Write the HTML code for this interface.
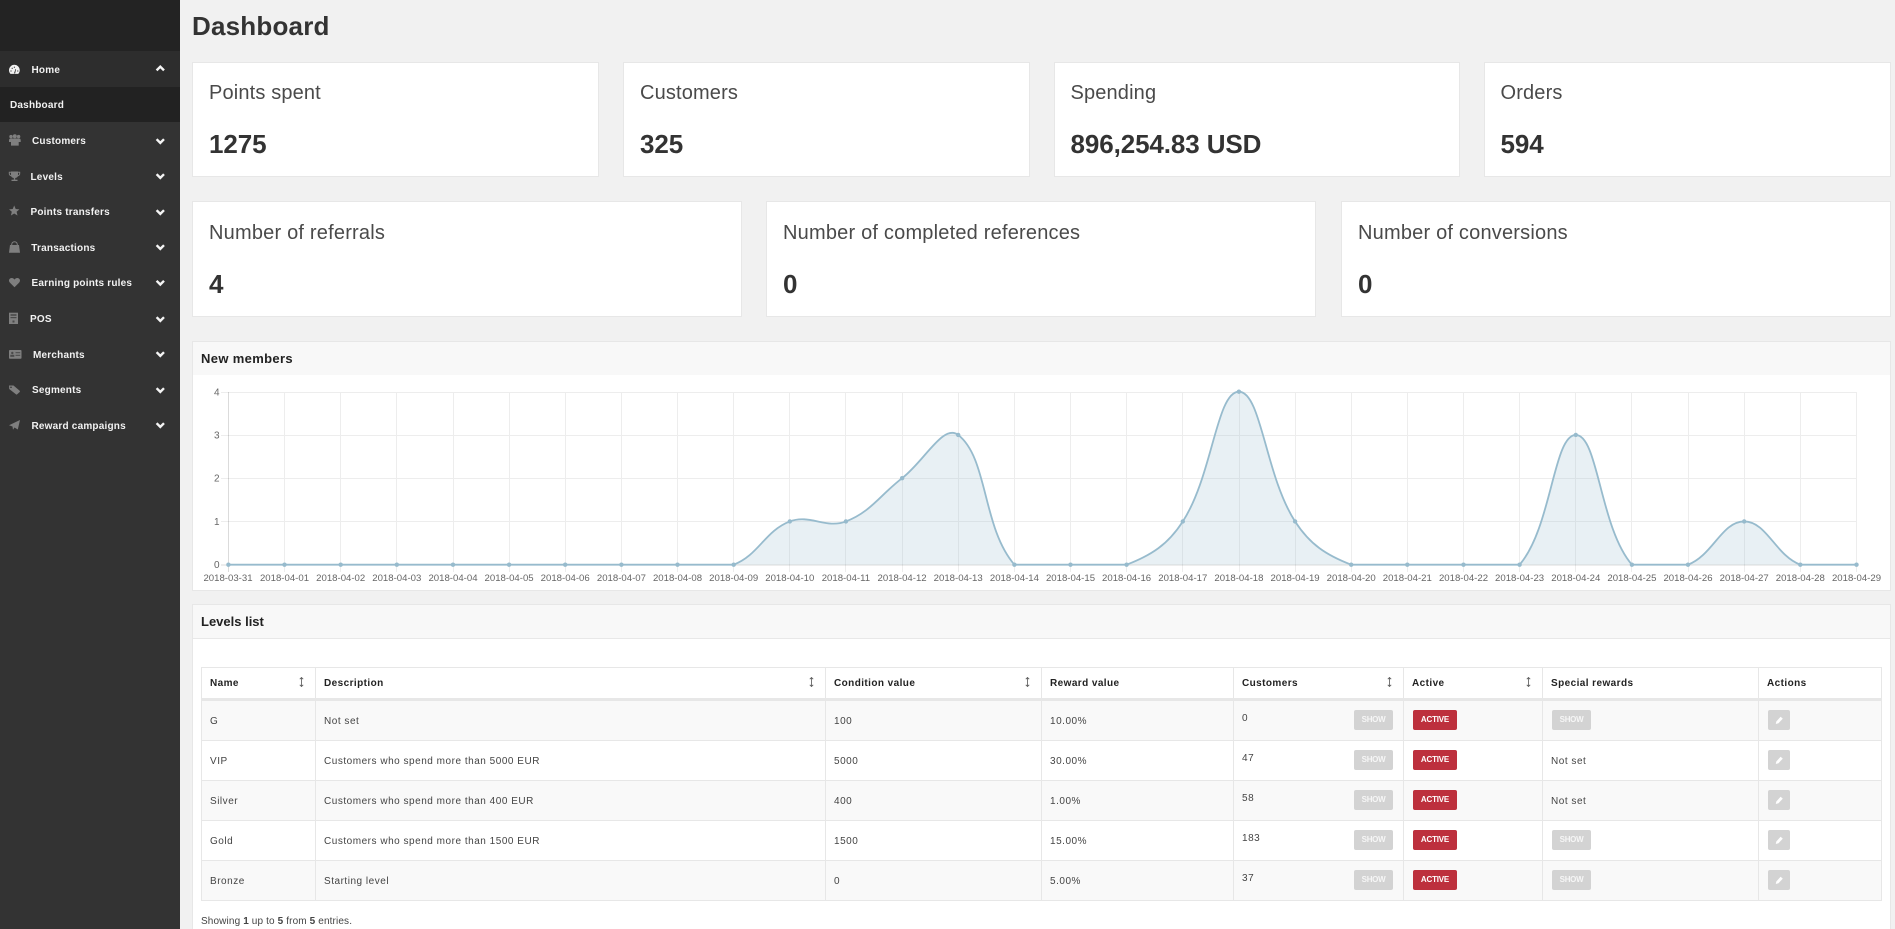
<!DOCTYPE html>
<html lang="en">
<head>
<meta charset="utf-8">
<title>Dashboard</title>
<style>
html,body{margin:0;padding:0;width:1895px;height:929px;overflow:hidden;background:#f1f1f1;font-family:"Liberation Sans",sans-serif;color:#333}
body{position:relative}
.side{position:absolute;left:0;top:0;width:180px;height:929px;background:#333}
.side .top{position:absolute;left:0;top:0;width:180px;height:51px;background:#232323}
.side .home{position:absolute;left:0;top:51px;width:180px;height:36px;background:#2d2d2d}
.side .dash{position:absolute;left:0;top:87px;width:180px;height:35px;background:#222}
.nav{position:absolute;font-size:10px;font-weight:bold;line-height:14px;letter-spacing:.2px;color:#f2f2f2;white-space:nowrap}
.side svg{position:absolute;left:0;top:0}
h1{position:absolute;left:192px;top:11px;margin:0;font-size:26px;line-height:30px;font-weight:bold;letter-spacing:.2px;color:#333}
.card{position:absolute;box-sizing:border-box;background:#fff;border:1px solid #e7e7e7}
.r1{top:62px;height:115px;width:406px}
.r2{top:201px;height:116px;width:549px}
.lbl{position:absolute;left:16px;top:18px;font-size:20px;line-height:24px;letter-spacing:.15px;color:#4a4a4a;white-space:nowrap}
.val{position:absolute;left:16px;top:66px;font-size:26px;line-height:30px;font-weight:bold;letter-spacing:-.1px;color:#333;white-space:nowrap}
.panel{position:absolute;left:192px;width:1698px;box-sizing:border-box;background:#fff;border:1px solid #e7e7e7}
.phead{position:absolute;left:0;top:0;right:0;background:#f8f8f8}
.ptitle{position:absolute;font-size:13px;font-weight:bold;line-height:16px;color:#222;white-space:nowrap}
table{position:absolute;left:201px;top:667px;width:1681px;table-layout:fixed;border-spacing:0;border-collapse:separate;border-top:1px solid #e7e7e7;border-left:1px solid #e7e7e7;font-size:10px;letter-spacing:.52px;color:#444}
th,td{box-sizing:border-box;padding:2px 0 0 8px;text-align:left;vertical-align:middle;border-right:1px solid #e7e7e7;position:relative;white-space:nowrap;line-height:14px}
th{height:33px;border-bottom:3px solid #e7e7e7;font-weight:bold;color:#222;background:#fff;letter-spacing:.42px}
td{height:40px;border-bottom:1px solid #e7e7e7}
tr.o td{background:#f9f9f9}
tr.e td{background:#fff}
.n{position:relative;top:-3px}
.b{position:absolute;top:9px;height:20px;border-radius:2px;background:#d3d3d3;color:#f6f6f6;font-size:8px;font-weight:bold;line-height:20px;text-align:center;letter-spacing:-.3px}
.a{background:#bd303d;color:#fff;letter-spacing:-.2px;width:44px;left:9px}
.s1{width:39px;left:120px}
.s2{width:39px;left:9px}
.ed{width:22px;left:9px}
.ed svg{position:absolute;left:0;top:0}
.so{position:absolute;top:9px}
.foot{position:absolute;left:201px;top:914.5px;font-size:10px;line-height:14px;letter-spacing:.13px;color:#444;white-space:nowrap}
#chart{position:absolute;left:0;top:0}
</style>
</head>
<body>

<div class="side">
  <div class="top"></div>
  <div class="home"></div>
  <div class="dash"></div>
  <svg width="180" height="929" viewBox="0 0 180 929">
    <g fill="none" stroke="#f4f4f4" stroke-width="2.4">
      <path d="M156.6 70.4l3.7-3.7 3.7 3.7"/>
      <path d="M156.6 139.2l3.7 3.7 3.7-3.7"/>
      <path d="M156.6 174.2l3.7 3.7 3.7-3.7"/>
      <path d="M156.6 210.2l3.7 3.7 3.7-3.7"/>
      <path d="M156.6 245.2l3.7 3.7 3.7-3.7"/>
      <path d="M156.6 280.8l3.7 3.7 3.7-3.7"/>
      <path d="M156.6 317.2l3.7 3.7 3.7-3.7"/>
      <path d="M156.6 352.2l3.7 3.7 3.7-3.7"/>
      <path d="M156.6 388.2l3.7 3.7 3.7-3.7"/>
      <path d="M156.6 423.2l3.7 3.7 3.7-3.7"/>
    </g>
    <path d="M10.5 73.9A5.4 5.4 0 1 1 18.3 73.9z" fill="#f2f2f2"/>
    <g fill="#2d2d2d"><circle cx="11" cy="71" r=".6"/><circle cx="12.2" cy="68.3" r=".6"/><circle cx="14.4" cy="67.2" r=".6"/><circle cx="17.8" cy="71" r=".6"/><path d="M14 73.4l1.5-4.4.6.2-1 4.2z"/></g>
    <g fill="#7f7f7f">
      <circle cx="11" cy="136.6" r="1.7"/><circle cx="14.8" cy="136.2" r="2"/><circle cx="18.6" cy="136.6" r="1.7"/>
      <path d="M9 140.2q0-1.7 2-1.7h7.7q2 0 2 1.7v1.8h-2v3.6h-7.7v-3.6h-2z"/>
      <path d="M11 171.5h7v3.5q0 3-3.5 3t-3.5-3z"/>
      <rect x="13.8" y="177.8" width="1.4" height="2"/><rect x="11.5" y="179.7" width="6" height="1.3"/>
      <polygon points="14.2,205.5 15.7,209 19.4,209.4 16.6,211.8 17.5,215.5 14.2,213.5 10.9,215.5 11.8,211.8 9,209.4 12.7,209"/>
      <path d="M10 245h9l1 7.7H9z"/>
      <path d="M14.5 287.3L10 282.8C8 280.6 9.2 278 11.7 278 13 278 14 278.7 14.5 279.6 15 278.7 16 278 17.3 278 19.8 278 21 280.6 19 282.8z"/>
      <rect x="9" y="312.7" width="9" height="11.3"/>
      <rect x="9" y="350" width="12.5" height="8.7" rx=".8"/>
      <path d="M9 385.5h4.5l6.2 5.2a1 1 0 0 1 0 1.3l-2.5 2.3a1 1 0 0 1-1.3 0L9.2 389z"/>
      <path d="M20 420L17.8 429.5 14.5 427.5 13 429.8 12.5 426.5 9 425.2z"/>
    </g>
    <g fill="none" stroke="#7f7f7f" stroke-width="1">
      <path d="M11 172.3H9.3v1.2q0 2 2.2 2.4M18 172.3h1.7v1.2q0 2-2.2 2.4"/>
      <path d="M11.7 245.5v-1a2.8 2.8 0 0 1 5.6 0v1"/>
    </g>
    <g fill="#4a4a4a">
      <rect x="10.5" y="314.2" width="6" height="1.6"/><rect x="10.5" y="317" width="6" height="1.2"/><rect x="12.5" y="320.5" width="2" height="2"/>
      <circle cx="12.3" cy="353" r="1.2"/><rect x="10.3" y="354.8" width="4" height="2"/><rect x="15.5" y="352.2" width="4.7" height="1"/><rect x="15.5" y="354.8" width="4.7" height="1"/>
      <circle cx="11" cy="387.3" r=".8" fill="#333"/>
    </g>
  </svg>
  <div class="nav" style="left:31.5px;top:63.5px">Home</div>
  <div class="nav" style="left:10px;top:98.5px">Dashboard</div>
  <div class="nav" style="left:32px;top:135px">Customers</div>
  <div class="nav" style="left:30.5px;top:171px">Levels</div>
  <div class="nav" style="left:30.5px;top:205.5px">Points transfers</div>
  <div class="nav" style="left:31.3px;top:241.5px">Transactions</div>
  <div class="nav" style="left:31.5px;top:276.5px">Earning points rules</div>
  <div class="nav" style="left:30px;top:312.5px">POS</div>
  <div class="nav" style="left:33px;top:348.5px">Merchants</div>
  <div class="nav" style="left:32px;top:383.5px">Segments</div>
  <div class="nav" style="left:31.5px;top:419.5px">Reward campaigns</div>
</div>

<h1>Dashboard</h1>

<div class="card r1" style="left:192px;width:407px"><div class="lbl">Points spent</div><div class="val">1275</div></div>
<div class="card r1" style="left:623px;width:407px"><div class="lbl">Customers</div><div class="val">325</div></div>
<div class="card r1" style="left:1054px"><div class="lbl" style="left:15.5px">Spending</div><div class="val" style="left:15.5px">896,254.83 USD</div></div>
<div class="card r1" style="left:1484px;width:407px"><div class="lbl" style="left:15.5px">Orders</div><div class="val" style="left:15.5px">594</div></div>

<div class="card r2" style="left:192px;width:550px"><div class="lbl" style="top:19px;letter-spacing:.2px">Number of referrals</div><div class="val" style="top:67px">4</div></div>
<div class="card r2" style="left:766px;width:550px"><div class="lbl" style="top:19px;letter-spacing:.2px">Number of completed references</div><div class="val" style="top:67px">0</div></div>
<div class="card r2" style="left:1341px;width:550px"><div class="lbl" style="top:19px;letter-spacing:.2px">Number of conversions</div><div class="val" style="top:67px">0</div></div>

<div class="panel" style="top:341px;height:250px;width:1699px"><div class="phead" style="height:33px"></div></div>
<div class="ptitle" style="left:201px;top:351px;letter-spacing:.35px">New members</div>

<svg id="chart" width="1895" height="929" viewBox="0 0 1895 929">
  <path fill="none" stroke="rgba(0,0,0,.07)" stroke-width="1" d="M221 392.5H1857M221 435.5H1857M221 478.5H1857M221 521.5H1857M284.5 392V572M340.5 392V572M396.5 392V572M453.5 392V572M509.5 392V572M565.5 392V572M621.5 392V572M677.5 392V572M733.5 392V572M789.5 392V572M845.5 392V572M902.5 392V572M958.5 392V572M1014.5 392V572M1070.5 392V572M1126.5 392V572M1182.5 392V572M1239.5 392V572M1295.5 392V572M1351.5 392V572M1407.5 392V572M1463.5 392V572M1519.5 392V572M1575.5 392V572M1631.5 392V572M1688.5 392V572M1744.5 392V572M1800.5 392V572M1856.5 392V572"/>
  <path fill="none" stroke="rgba(0,0,0,.14)" stroke-width="1" d="M221 565H1857M228.5 392V572"/>
  <path fill="rgba(151,187,205,.22)" stroke="#97bbcd" stroke-width="1.8" d="M228.4 564.7H733.7C758.76 555.05 764.74 531.1 789.8 521.45C809.65 513.8 826.05 529.1 845.9 521.45C870.96 511.8 879.64 495.5 902.1 478.2C924.56 460.9 943.2 423.39 958.2 434.95C988.1 457.99 982.24 527.54 1014.4 564.7H1126.6C1151.66 555.05 1167.8 544.56 1182.8 521.45C1212.7 475.36 1216.44 391.7 1238.9 391.7C1261.36 391.7 1265.2 475.36 1295.1 521.45C1310.1 544.56 1326.14 555.05 1351.2 564.7H1519.6C1551.76 527.54 1553.34 434.95 1575.8 434.95C1598.26 434.95 1599.74 527.54 1631.9 564.7H1688C1713.06 555.05 1721.74 521.45 1744.2 521.45C1766.66 521.45 1775.24 555.05 1800.3 564.7H1856.5"/>
  <g fill="#97bbcd">
    <circle cx="228.4" cy="564.7" r="2.2"/><circle cx="284.5" cy="564.7" r="2.2"/><circle cx="340.7" cy="564.7" r="2.2"/><circle cx="396.8" cy="564.7" r="2.2"/><circle cx="453" cy="564.7" r="2.2"/><circle cx="509.1" cy="564.7" r="2.2"/><circle cx="565.2" cy="564.7" r="2.2"/><circle cx="621.4" cy="564.7" r="2.2"/><circle cx="677.5" cy="564.7" r="2.2"/><circle cx="733.7" cy="564.7" r="2.2"/>
    <circle cx="789.8" cy="521.45" r="2.2"/><circle cx="845.9" cy="521.45" r="2.2"/><circle cx="902.1" cy="478.2" r="2.2"/><circle cx="958.2" cy="434.95" r="2.2"/><circle cx="1014.4" cy="564.7" r="2.2"/><circle cx="1070.5" cy="564.7" r="2.2"/><circle cx="1126.6" cy="564.7" r="2.2"/><circle cx="1182.8" cy="521.45" r="2.2"/><circle cx="1238.9" cy="391.7" r="2.2"/><circle cx="1295.1" cy="521.45" r="2.2"/>
    <circle cx="1351.2" cy="564.7" r="2.2"/><circle cx="1407.3" cy="564.7" r="2.2"/><circle cx="1463.5" cy="564.7" r="2.2"/><circle cx="1519.6" cy="564.7" r="2.2"/><circle cx="1575.8" cy="434.95" r="2.2"/><circle cx="1631.9" cy="564.7" r="2.2"/><circle cx="1688" cy="564.7" r="2.2"/><circle cx="1744.2" cy="521.45" r="2.2"/><circle cx="1800.3" cy="564.7" r="2.2"/><circle cx="1856.5" cy="564.7" r="2.2"/>
  </g>
  <g font-family="'Liberation Sans',sans-serif" font-size="10" fill="#666" text-anchor="end">
    <text x="219.5" y="395.5">4</text><text x="219.5" y="438.5">3</text><text x="219.5" y="481.5">2</text><text x="219.5" y="525">1</text><text x="219.5" y="568">0</text>
  </g>
  <g font-family="'Liberation Sans',sans-serif" font-size="9.6" fill="#666" text-anchor="middle">
    <text x="228" y="581">2018-03-31</text><text x="284.5" y="581">2018-04-01</text><text x="340.7" y="581">2018-04-02</text><text x="396.8" y="581">2018-04-03</text><text x="453" y="581">2018-04-04</text><text x="509.1" y="581">2018-04-05</text><text x="565.2" y="581">2018-04-06</text><text x="621.4" y="581">2018-04-07</text><text x="677.5" y="581">2018-04-08</text><text x="733.7" y="581">2018-04-09</text>
    <text x="789.8" y="581">2018-04-10</text><text x="845.9" y="581">2018-04-11</text><text x="902.1" y="581">2018-04-12</text><text x="958.2" y="581">2018-04-13</text><text x="1014.4" y="581">2018-04-14</text><text x="1070.5" y="581">2018-04-15</text><text x="1126.6" y="581">2018-04-16</text><text x="1182.8" y="581">2018-04-17</text><text x="1238.9" y="581">2018-04-18</text><text x="1295.1" y="581">2018-04-19</text>
    <text x="1351.2" y="581">2018-04-20</text><text x="1407.3" y="581">2018-04-21</text><text x="1463.5" y="581">2018-04-22</text><text x="1519.6" y="581">2018-04-23</text><text x="1575.8" y="581">2018-04-24</text><text x="1631.9" y="581">2018-04-25</text><text x="1688" y="581">2018-04-26</text><text x="1744.2" y="581">2018-04-27</text><text x="1800.3" y="581">2018-04-28</text><text x="1856.5" y="581">2018-04-29</text>
  </g>
</svg>

<div class="panel" style="top:604px;height:325px;width:1699px;border-bottom:0"><div class="phead" style="height:33px;border-bottom:1px solid #e8e8e8"></div></div>
<div class="ptitle" style="left:201px;top:614px">Levels list</div>

<table>
<colgroup><col style="width:114px"><col style="width:510px"><col style="width:216px"><col style="width:192px"><col style="width:170px"><col style="width:139px"><col style="width:216px"><col style="width:123px"></colgroup>
<thead><tr>
<th>Name<svg class="so" style="left:97px" width="5" height="10" viewBox="0 0 5 10"><path d="M2.5 .5V9.5M.8 2.2L2.5 .5 4.2 2.2M.8 7.8L2.5 9.5 4.2 7.8" fill="none" stroke="#555" stroke-width=".8"/></svg></th>
<th>Description<svg class="so" style="left:493px" width="5" height="10" viewBox="0 0 5 10"><path d="M2.5 .5V9.5M.8 2.2L2.5 .5 4.2 2.2M.8 7.8L2.5 9.5 4.2 7.8" fill="none" stroke="#555" stroke-width=".8"/></svg></th>
<th>Condition value<svg class="so" style="left:198.5px" width="5" height="10" viewBox="0 0 5 10"><path d="M2.5 .5V9.5M.8 2.2L2.5 .5 4.2 2.2M.8 7.8L2.5 9.5 4.2 7.8" fill="none" stroke="#555" stroke-width=".8"/></svg></th>
<th>Reward value</th>
<th>Customers<svg class="so" style="left:153px" width="5" height="10" viewBox="0 0 5 10"><path d="M2.5 .5V9.5M.8 2.2L2.5 .5 4.2 2.2M.8 7.8L2.5 9.5 4.2 7.8" fill="none" stroke="#555" stroke-width=".8"/></svg></th>
<th>Active<svg class="so" style="left:122px" width="5" height="10" viewBox="0 0 5 10"><path d="M2.5 .5V9.5M.8 2.2L2.5 .5 4.2 2.2M.8 7.8L2.5 9.5 4.2 7.8" fill="none" stroke="#555" stroke-width=".8"/></svg></th>
<th>Special rewards</th>
<th>Actions</th>
</tr></thead>
<tbody>
<tr class="o"><td>G</td><td>Not set</td><td>100</td><td>10.00%</td><td><span class="n">0</span><span class="b s1">SHOW</span></td><td><span class="b a">ACTIVE</span></td><td><span class="b s2">SHOW</span></td><td><span class="b ed"><svg width="22" height="20" viewBox="0 0 22 20"><polygon points="7.8,14 8.3,11.5 12.6,6.8 14.8,8.6 10.5,13.2" fill="#fff"/></svg></span></td></tr>
<tr class="e"><td>VIP</td><td>Customers who spend more than 5000 EUR</td><td>5000</td><td>30.00%</td><td><span class="n">47</span><span class="b s1">SHOW</span></td><td><span class="b a">ACTIVE</span></td><td>Not set</td><td><span class="b ed"><svg width="22" height="20" viewBox="0 0 22 20"><polygon points="7.8,14 8.3,11.5 12.6,6.8 14.8,8.6 10.5,13.2" fill="#fff"/></svg></span></td></tr>
<tr class="o"><td>Silver</td><td>Customers who spend more than 400 EUR</td><td>400</td><td>1.00%</td><td><span class="n">58</span><span class="b s1">SHOW</span></td><td><span class="b a">ACTIVE</span></td><td>Not set</td><td><span class="b ed"><svg width="22" height="20" viewBox="0 0 22 20"><polygon points="7.8,14 8.3,11.5 12.6,6.8 14.8,8.6 10.5,13.2" fill="#fff"/></svg></span></td></tr>
<tr class="e"><td>Gold</td><td>Customers who spend more than 1500 EUR</td><td>1500</td><td>15.00%</td><td><span class="n">183</span><span class="b s1">SHOW</span></td><td><span class="b a">ACTIVE</span></td><td><span class="b s2">SHOW</span></td><td><span class="b ed"><svg width="22" height="20" viewBox="0 0 22 20"><polygon points="7.8,14 8.3,11.5 12.6,6.8 14.8,8.6 10.5,13.2" fill="#fff"/></svg></span></td></tr>
<tr class="o"><td>Bronze</td><td>Starting level</td><td>0</td><td>5.00%</td><td><span class="n">37</span><span class="b s1">SHOW</span></td><td><span class="b a">ACTIVE</span></td><td><span class="b s2">SHOW</span></td><td><span class="b ed"><svg width="22" height="20" viewBox="0 0 22 20"><polygon points="7.8,14 8.3,11.5 12.6,6.8 14.8,8.6 10.5,13.2" fill="#fff"/></svg></span></td></tr>
</tbody>
</table>

<div class="foot">Showing <b>1</b> up to <b>5</b> from <b>5</b> entries.</div>

</body>
</html>
